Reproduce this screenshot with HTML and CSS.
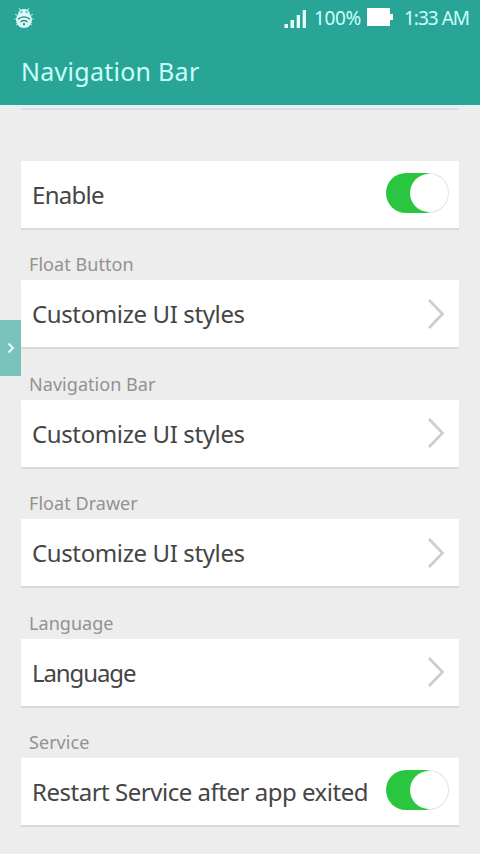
FILE: index.html
```html
<!DOCTYPE html>
<html lang="en">
<head>
<meta charset="utf-8">
<title>Navigation Bar</title>
<link rel="stylesheet" href="styles.css">
</head>
<body>
<header class="header">
  <div class="status">
    <svg class="bug" width="22" height="22" viewBox="0 0 22 22">
      <path d="M6 1l2 3M16 1l-2 3M2 7l3 2M20 7l-3 2M1 12h4M21 12h-4M3 18l3-2M19 18l-3-2" stroke="#8fdcd4" stroke-width="1.200"/>
      <path d="M5 8C5 0 17 0 17 8z" fill="#d4faf7"/>
      <ellipse cx="11" cy="13" rx="8" ry="8" fill="#d4faf7"/>
      <circle cx="8.4" cy="5" r="1" fill="#48aaa0"/><circle cx="13.6" cy="5" r="1" fill="#48aaa0"/>
      <path d="M5 12.3q6-5 12 0M7.5 15q3.500-3 7 0" fill="none" stroke="#377b77" stroke-width="1.300"/>
      <circle cx="11" cy="17.200" r="1.100" fill="#377b77"/>
    </svg>
    <svg class="signal" width="22" height="20" viewBox="0 0 22 20" fill="#e5fffb">
      <rect x="0.500" y="15" width="3.500" height="4"/><rect x="6.500" y="11" width="3.500" height="8"/><rect x="12.700" y="6" width="3.300" height="13"/><rect x="18.700" y="1" width="3.300" height="18"/>
    </svg>
    <span class="percent">100%</span>
    <svg class="battery" width="26" height="18" viewBox="0 0 26 18" fill="#fff"><path d="M0 0H23V6H26V12H23V18H0z"/></svg>
    <span class="time">1:33 AM</span>
  </div>
  <h1 class="title">Navigation Bar</h1>
</header>
<main class="content">
  <div class="divider"></div>
  <section class="group first">
    <div class="card"><span class="name enable">Enable</span><span class="switch"><span class="knob"></span></span></div>
  </section>
  <section class="group">
    <h2 class="label">Float Button</h2>
    <div class="card"><span class="name custom">Customize UI styles</span><svg class="arrow" width="18" height="32" viewBox="0 0 18 32"><path d="M2 2L15.500 16L2 30"/></svg></div>
  </section>
  <section class="group">
    <h2 class="label">Navigation Bar</h2>
    <div class="card"><span class="name custom">Customize UI styles</span><svg class="arrow" width="18" height="32" viewBox="0 0 18 32"><path d="M2 2L15.500 16L2 30"/></svg></div>
  </section>
  <section class="group">
    <h2 class="label">Float Drawer</h2>
    <div class="card"><span class="name custom">Customize UI styles</span><svg class="arrow" width="18" height="32" viewBox="0 0 18 32"><path d="M2 2L15.500 16L2 30"/></svg></div>
  </section>
  <section class="group">
    <h2 class="label">Language</h2>
    <div class="card"><span class="name lang">Language</span><svg class="arrow" width="18" height="32" viewBox="0 0 18 32"><path d="M2 2L15.500 16L2 30"/></svg></div>
  </section>
  <section class="group">
    <h2 class="label">Service</h2>
    <div class="card"><span class="name restart">Restart Service after app exited</span><span class="switch"><span class="knob"></span></span></div>
  </section>
</main>
<div class="drawer"><svg width="8" height="12" viewBox="0 0 8 12"><path d="M1.500 1.500L6 6L1.500 10.500" fill="none" stroke="#e0fffc" stroke-width="2"/></svg></div>
</body>
</html>
```
FILE: styles.css
```css
* { box-sizing: border-box; }
body { margin: 0; height: 854px; overflow: hidden; background: #ededed; font-family: "Noto Sans", sans-serif; position: relative; }
h1, h2 { margin: 0; font-weight: 400; }
svg { display: block; flex: none; }
.header { height: 105px; background: #29a598; color: #c9fffa; }
.status { height: 36px; display: flex; align-items: center; padding: 0 11px 0 13px; font-size: 19px; white-space: nowrap; }
.bug { margin-top: -1px; }
.signal { margin: 2px 8px 0 auto; }
.percent { letter-spacing: -0.4px; width: 47px; }
.battery { margin: -3px 0 0 6px; }
.time { margin-left: 11px; width: 65px; letter-spacing: -1px; }
.title { padding-left: 21px; font-size: 25px; line-height: 34px; margin-top: 18px; letter-spacing: 0.27px; }
.content { padding: 0 21px; border-top: 1px solid #dcf6f6; }
.divider { height: 2px; margin-top: 2px; background: #d8dfe4; }
.group { height: 119.4px; display: flex; flex-direction: column; justify-content: flex-end; }
.group.first { height: 118px; }
.label { padding-left: 8px; font-size: 18px; line-height: 24px; color: #929292; margin-bottom: 4px; white-space: nowrap; letter-spacing: 0.05px; }
.card { height: 67px; flex: none; background: #fff; box-shadow: 0 2px 1px #dadada; display: flex; align-items: center; justify-content: space-between; padding: 0 10px 0 11px; }
.name { font-size: 24px; line-height: 34px; color: #454545; white-space: nowrap; margin-top: 1px; }
.enable { letter-spacing: -0.7px; }
.custom { letter-spacing: -0.38px; }
.lang { letter-spacing: -1.1px; }
.restart { letter-spacing: -0.48px; }
.arrow { margin-right: 4px; fill: none; stroke: #cdcdcd; stroke-width: 2.700; }
.switch { width: 63px; height: 40px; margin-top: -3px; border-radius: 20px; background: linear-gradient(90deg, #2ac640 40px, #e4e4e4 44px); display: flex; justify-content: flex-end; align-items: center; padding-right: 1px; flex: none; }
.knob { width: 38px; height: 38px; border-radius: 50%; background: #fff; }
.drawer { position: absolute; left: 0; top: 320px; width: 21px; height: 56px; background: #79c2bc; display: flex; align-items: center; padding-left: 7px; }
```
